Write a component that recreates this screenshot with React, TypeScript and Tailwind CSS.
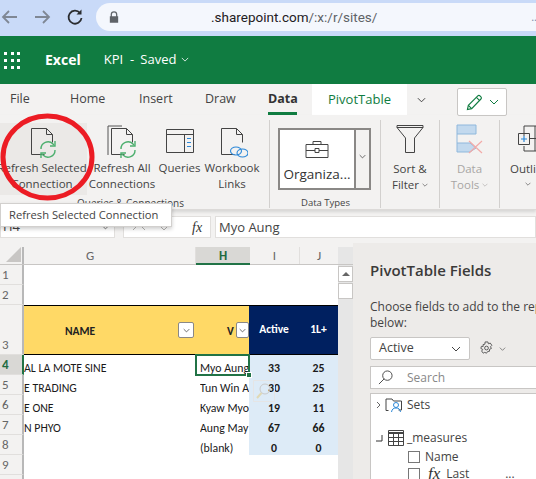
import React from "react";

const ui = "font-['Open_Sans','Noto_Sans',sans-serif]";

function Chevron({ className = "", color = "#444" }: { className?: string; color?: string }) {
  return (
    <svg viewBox="0 0 10 6" className={className} fill="none" stroke={color} strokeWidth="1">
      <path d="M1 1l4 4 4-4" />
    </svg>
  );
}

function DocIcon({ children, back = false }: { children?: React.ReactNode; back?: boolean }) {
  return (
    <svg viewBox="0 0 32 34" className="w-[32px] h-[34px]" fill="none">
      {back && <path d="M2 30V1h14" stroke="#555" strokeWidth="1" />}
      <path d="M5.5 29.5V3.5h15l6 6v8M5.500 29.5h13M20.5 3.500v6h6" stroke="#444" strokeWidth="1" />
      {children}
    </svg>
  );
}

function RefreshArrows() {
  return (
    <g fill="none" stroke="#4caf6e" strokeWidth="1.4">
      <path d="M15 24a7 7 0 0 1 12-5l1 1" />
      <path d="M29 16v5h-5" />
      <path d="M29 25a7 7 0 0 1-12 5l-1-1" />
      <path d="M15 33v-5h5" />
    </g>
  );
}

function RibbonButton({ label, icon, w, active = false }: { label: React.ReactNode; icon: React.ReactNode; w: string; active?: boolean }) {
  return (
    <div className={`${w} h-[72px] flex flex-col items-center shrink-0 overflow-visible ${active ? "bg-[#ebe9e7] pr-[3px]" : ""}`}>
      <div className="h-[37px] pt-[2px] flex items-start justify-center">{icon}</div>
      <div className="text-[11.5px] leading-[16px] text-center whitespace-nowrap text-[#444]">{label}</div>
    </div>
  );
}

function Sep() {
  return <div className="w-px h-[88px] bg-[#d2d0ce] shrink-0 -mt-[3px]" />;
}

const rows = [
  { n: "4", g: "AL LA MOTE SINE", h: "Myo Aung", i: "33", j: "25" },
  { n: "5", g: "E TRADING", h: "Tun Win A", i: "30", j: "25" },
  { n: "6", g: "E ONE", h: "Kyaw Myo", i: "19", j: "11" },
  { n: "7", g: "N PHYO", h: "Aung May", i: "67", j: "66" },
  { n: "8", g: "", h: "(blank)", i: "0", j: "0" },
];

function FilterBtn({ className = "" }: { className?: string }) {
  return (
    <div className={`h-[16px] bg-white border border-[#8a8886] rounded-[2px] flex items-center justify-center ${className}`}>
      <Chevron className="w-[7px] h-[5px]" color="#333" />
    </div>
  );
}

function RowHead({ n, h, active = false, bottom = false }: { n: string; h: string; active?: boolean; bottom?: boolean }) {
  return (
    <div className={`${h} w-[24px] shrink-0 border-r-2 border-b border-b-[#e1dfdd] pl-[2px] text-[13px] leading-[19px] flex ${bottom ? "items-end" : "items-center"} ${active ? "bg-[#d9d8d5] text-[#1e6b41] font-bold border-r-[#217346]" : "bg-[#f3f2f1] text-[#666] border-r-[#b8b8b8]"}`}>
      {n}
    </div>
  );
}

export default function App() {
  return (
    <div className={`${ui} relative w-[536px] h-[479px] overflow-hidden bg-[#f3f2f1] flex flex-col`}>
      {/* browser bar */}
      <div className="h-[36px] bg-[#c9daf8] pt-[3px] shrink-0">
        <div className="h-[28px] flex items-center relative">
          <svg viewBox="0 0 90 28" className="w-[90px] h-[28px] shrink-0" fill="none" strokeWidth="1.8">
            <path d="M17 14H3M9 8l-6 6 6 6" stroke="#7f8794" />
            <path d="M35 14h14M43 8l6 6-6 6" stroke="#7f8794" />
            <path d="M80 10a6.5 6.5 0 1 0 1.500 5" stroke="#2a2c30" />
            <path d="M81.500 6.500v5h-5z" fill="#2a2c30" stroke="none" />
          </svg>
          <div className="ml-[6px] flex-1 h-[28px] rounded-l-[14px] bg-[#f4f7fd] flex items-center">
            <svg viewBox="0 0 12 14" className="w-[10px] h-[12px] ml-[13px] shrink-0" fill="#5f6368">
              <path d="M2 6V4a4 4 0 0 1 8 0v2h1v8H1V6zm1.500 0h5V4a2.500 2.500 0 0 0-5 0z" />
            </svg>
            <span className="ml-[92px] text-[13.5px] text-[#1f2023] font-['Roboto',sans-serif] whitespace-nowrap">
              .sharepoint.com<span className="text-[#5f6368]">/:x:/r/sites/</span>
            </span>
            <span className="ml-auto text-[#7a8aa8] text-[11px] leading-[8px] mr-[-1px]">..</span>
          </div>
        </div>
      </div>

      {/* excel title */}
      <div className="h-[48px] bg-[#107c41] flex items-center text-white shrink-0 pb-[1px]">
        <div className="ml-[4px] w-[16px] h-[16px] grid grid-cols-3 gap-[4px]">
          {Array.from({ length: 9 }).map((_, i) => (
            <div key={i} className="w-[3px] h-[3px] bg-white" />
          ))}
        </div>
        <span className="ml-[25px] text-[14px] font-bold">Excel</span>
        <span className="ml-[23px] text-[13px]">KPI</span>
        <span className="ml-[7px] text-[13px]">-</span>
        <span className="ml-[6px] text-[13px]">Saved</span>
        <Chevron className="ml-[5px] w-[8px] h-[5px]" color="#fff" />
      </div>

      {/* tabs */}
      <div className="h-[31px] shrink-0 flex items-start text-[12.5px] text-[#444] relative">
        <span className="ml-[10px] mt-[6px] w-[21px]">File</span>
        <span className="ml-[39px] mt-[6px] w-[38px]">Home</span>
        <span className="ml-[31px] mt-[6px] w-[35px]">Insert</span>
        <span className="ml-[31px] mt-[6px] w-[32px]">Draw</span>
        <div className="ml-[31px] w-[29px] h-[31px] border-b-[3px] border-[#107c41] font-bold text-[#333] pt-[6px] whitespace-nowrap">Data</div>
        <div className="ml-[15px] w-[95px] h-[31px] bg-white text-[#107c41] text-center pt-[6px] text-[13px] font-medium">PivotTable</div>
        <Chevron className="ml-[10px] mt-[13px] w-[9px] h-[6px]" color="#333" />
        <div className="ml-[31px] mt-[4px] w-[50px] h-[28px] bg-white border border-[#c8c6c4] rounded-[2px] flex items-center justify-center gap-[6px] z-10">
          <svg viewBox="0 0 18 18" className="w-[17px] h-[17px]" fill="none" stroke="#107c41" strokeWidth="1.2">
            <path d="M1.500 16.500l1-4.500L12.500 2a1.600 1.600 0 0 1 2.300 0l1 1a1.600 1.600 0 0 1 0 2.300L6 15.500z" />
            <path d="M11 3.500l3.500 3.500M2.500 12l3.500 3.500" />
          </svg>
          <Chevron className="w-[10px] h-[6px]" color="#107c41" />
        </div>
      </div>

      {/* ribbon */}
      <div className="h-[95px] shrink-0 flex items-start pt-[8px] border-b border-[#dcdad8] shadow-[0_2px_3px_rgba(0,0,0,0.12)] z-10 overflow-hidden relative">
        <div className="w-[269px] shrink-0 flex flex-col items-stretch">
          <div className="flex">
            <RibbonButton
              w="w-[87px]"
              active
              label={<>Refresh Selected<br />Connection</>}
              icon={<DocIcon><RefreshArrows /></DocIcon>}
            />
            <RibbonButton
              w="w-[70px]"
              label={<>Refresh All<br />Connections</>}
              icon={<DocIcon back><RefreshArrows /></DocIcon>}
            />
            <RibbonButton
              w="w-[45px]"
              label="Queries"
              icon={
                <svg viewBox="0 0 32 34" className="w-[32px] h-[34px]" fill="none" stroke="#444">
                  <path d="M2.500 4.500h27v23h-27zM2.500 9.500h27M20.500 9.500v18" />
                  <path d="M23 13.500h4M23 17.500h4M23 21.500h4" stroke="#2b88d8" strokeWidth="1.2" />
                </svg>
              }
            />
            <RibbonButton
              w="w-[60px]"
              label={<>Workbook<br />Links</>}
              icon={
                <DocIcon>
                  <g stroke="#2b88d8" strokeWidth="1.1" fill="none">
                    <ellipse cx="20" cy="26" rx="5.500" ry="4" />
                    <ellipse cx="26.500" cy="28" rx="5.500" ry="4" />
                  </g>
                </DocIcon>
              }
            />
          </div>
          <span className="text-[10px] leading-[14px] mt-[1px] pl-[77px] text-[#444] whitespace-nowrap">Queries &amp; Connections</span>
        </div>
        <Sep />
        <div className="w-[110px] shrink-0 flex flex-col items-start pl-[8px]">
          <div className="mt-[5px] w-[93px] h-[62px] border-2 border-[#8a8886] flex">
            <div className="w-[76px] border-r-2 border-[#8a8886] bg-white flex flex-col items-center">
              <svg viewBox="0 0 24 18" className="w-[24px] h-[18px] mt-[10px]" fill="none" stroke="#444">
                <path d="M1 4.500h22v13H1zM8 4.500v-3h8v3M1 10.500h9M14 10.500h9M10 8.500h4v4h-4z" />
              </svg>
              <span className="text-[13.5px] leading-[18px] mt-[7px] text-[#333] whitespace-nowrap">Organiza...</span>
            </div>
            <div className="flex-1 flex items-center justify-center bg-[#f3f2f1]">
              <Chevron className="w-[7px] h-[5px] mb-[6px]" color="#333" />
            </div>
          </div>
          <span className="text-[9.5px] leading-[14px] mt-[6px] ml-[23px] text-[#444] whitespace-nowrap">Data Types</span>
        </div>
        <Sep />
        <div className="w-[58px] shrink-0 flex flex-col items-center">
          <svg viewBox="0 0 28 30" className="w-[28px] h-[30px] mt-[1px]" fill="none" stroke="#444">
            <path d="M1 3.500V1.500h26v2L18.500 14v14.500h-9V14z" />
            <path d="M1 3.500h26" />
          </svg>
          <div className="text-[11.5px] leading-[16px] text-[#444] mt-[7px] text-center whitespace-nowrap">
            Sort &amp;
            <div className="flex items-center gap-[3px]">Filter<Chevron className="w-[6px] h-[4px]" color="#444" /></div>
          </div>
        </div>
        <Sep />
        <div className="w-[59px] shrink-0 flex flex-col items-center">
          <svg viewBox="0 0 28 30" className="w-[28px] h-[30px] mt-[1px]" fill="none">
            <path d="M1 1h19v9H1z" fill="#c2d9ee" stroke="#8fb8dc" />
            <path d="M1 10v9" stroke="#8fb8dc" />
            <path d="M1 19h13l6 5-6 4H1z" fill="#c2d9ee" stroke="#8fb8dc" />
            <path d="M13 17l13 12M26 17L13 29" stroke="#f2aaa8" strokeWidth="1.2" />
          </svg>
          <div className="text-[11.5px] leading-[16px] text-[#a8a6a4] mt-[7px] text-center whitespace-nowrap">
            Data
            <div className="flex items-center gap-[3px]">Tools<Chevron className="w-[6px] h-[4px]" color="#a8a6a4" /></div>
          </div>
        </div>
        <Sep />
        <div className="w-[60px] shrink-0 flex flex-col overflow-hidden">
          <svg viewBox="0 0 40 30" className="w-[40px] h-[30px] mt-[1px] self-start ml-[17px] shrink-0" fill="none" stroke="#444">
            <path d="M12 2H7v10M7 22v5h5M12 2h28M12 27h28M12 14.500h28M18 2v25" />
            <path d="M1.500 9.500h11v11h-11z" />
            <path d="M4 15h6M7 12v6" stroke="#2b88d8" strokeWidth="1.2" />
          </svg>
          <div className="text-[11.5px] leading-[16px] text-[#444] mt-[7px] whitespace-nowrap pl-[10px]">
            Outline
            <Chevron className="ml-[15px] mt-[5px] w-[6px] h-[4px]" color="#444" />
          </div>
        </div>
      </div>

      {/* formula bar */}
      <div className="h-[33px] shrink-0 pt-[6px] flex items-start bg-[#f3f2f1]">
        <div className="w-[115px] h-[22px] bg-white border border-[#e1dfdd] text-[13px] text-[#444] flex items-center px-[2px] justify-between">
          <span>H4</span>
          <Chevron className="w-[7px] h-[5px] mr-[3px]" color="#444" />
        </div>
        <div className="ml-[8px] w-[88px] h-[22px] bg-white border border-[#e1dfdd] flex items-center">
          <svg viewBox="0 0 60 10" className="w-[60px] h-[10px]" fill="none" stroke="#b5b3b1" strokeWidth="1">
            <path d="M9 8l6-6 6 6M34 2l6 6 6-6" />
          </svg>
          <span className="ml-[8px] text-[14px] italic font-['Liberation_Serif',serif] text-[#333]">fx</span>
        </div>
        <div className="ml-[4px] flex-1 h-[22px] bg-white border border-[#e1dfdd] text-[13px] leading-[20px] pl-[3px] text-[#444]">Myo Aung</div>
      </div>

      {/* sheet + panel */}
      <div className="flex-1 flex min-h-0">
        <div className="w-[353px] shrink-0 flex flex-col font-['Carlito','Open_Sans',sans-serif] pt-[4px]">
          {/* column heads */}
          <div className="h-[18px] shrink-0 flex text-[13px] leading-[17px] bg-[#f3f2f1] border-b border-[#c8c6c4]">
            <div className="w-[24px] border-r-2 border-[#b8b8b8] flex items-start justify-end pr-[1px]">
              <svg viewBox="0 0 15 15" className="w-[15px] h-[15px]"><path d="M15 0v15H0z" fill="#c8c6c4" /></svg>
            </div>
            <div className="w-[172px] pl-[62px] text-[#666] border-r border-[#e1dfdd]">G</div>
            <div className="w-[54px] text-center text-[#1e6b41] font-bold bg-[#d9d8d5] border-b-2 border-[#217346] h-[18px]">H</div>
            <div className="w-[50px] text-center text-[#666] border-r border-[#e1dfdd]">I</div>
            <div className="w-[38px] text-center text-[#666]">J</div>
            <div className="flex-1 bg-[#e6e6e6]" />
          </div>
          <div className="flex-1 flex min-h-0">
            <div className="w-[338px] shrink-0 bg-white flex flex-col text-[11.8px] text-[#1a1a1a]">
              <div className="flex h-[20px] shrink-0"><RowHead n="1" h="h-[20px]" /></div>
              <div className="flex h-[20px] shrink-0"><RowHead n="2" h="h-[20px]" /></div>
              <div className="flex h-[50px] shrink-0">
                <RowHead n="3" h="h-[50px]" bottom />
                <div className="flex-1 flex border-y border-black">
                  <div className="w-[225px] bg-[#ffd966] relative overflow-hidden">
                    <span className="absolute left-[41px] top-[17px] font-bold text-[11.5px] text-[#222]">NAME</span>
                    <FilterBtn className="w-[16px] absolute left-[154px] top-[16px]" />
                    <span className="absolute left-[203px] top-[17px] font-bold text-[11.5px] text-[#222]">V</span>
                    <FilterBtn className="w-[13px] absolute left-[212px] top-[16px]" />
                  </div>
                  <div className="flex-1 bg-[#002060] text-white font-bold text-[11.5px] flex">
                    <div className="w-[50px] text-center pt-[15px]">Active</div>
                    <div className="flex-1 text-center pt-[15px]">1L+</div>
                  </div>
                </div>
              </div>
              {rows.map((r, idx) => (
                <div key={r.n} className="flex h-[20px] shrink-0 leading-[26px]">
                  <RowHead n={r.n} h="h-[20px]" active={idx === 0} />
                  <div className="w-[172px] overflow-hidden whitespace-nowrap">{r.g}</div>
                  <div className="w-[53px] relative whitespace-nowrap pl-[4px]">
                    <div className="overflow-hidden h-[20px]">{r.h}</div>
                    {idx === 0 && (
                      <div className="absolute -left-px -top-px w-[55px] h-[22px] border-2 border-[#217346]">
                        <div className="absolute -right-[4px] -bottom-[4px] w-[6px] h-[6px] bg-[#217346] border border-white" />
                      </div>
                    )}
                  </div>
                  <div className="w-[50px] bg-[#ddebf7] text-center font-bold">{r.i}</div>
                  <div className="flex-1 bg-[#ddebf7] text-center font-bold">{r.j}</div>
                </div>
              ))}
              {[9, 10, 11].map((n) => (
                <div key={n} className="flex h-[20px] shrink-0"><RowHead n={String(n)} h="h-[20px]" /></div>
              ))}
            </div>
            <div className="flex-1 bg-[#e6e6e6] flex flex-col items-start pt-[1px]">
              <div className="w-[15px] h-[16px] bg-white border border-[#c8c6c4] flex items-center justify-center">
                <div className="w-0 h-0 border-x-[4px] border-x-transparent border-b-[4px] border-b-[#666]" />
              </div>
              <div className="w-[15px] h-[16px] mt-px bg-white border border-[#c8c6c4]" />
            </div>
          </div>
        </div>

        {/* panel */}
        <div className="flex-1 bg-[#edebe9] overflow-hidden pl-[17px] text-[#444] relative">
          <div className="text-[15px] leading-[20px] font-semibold text-[#3b3a39] mt-[17px] whitespace-nowrap">PivotTable Fields</div>
          <div className="text-[12px] leading-[16px] mt-[19px] whitespace-nowrap">Choose fields to add to the report<br />below:</div>
          <div className="flex items-center mt-[6px]">
            <div className="w-[100px] h-[23px] bg-white border border-[#c8c6c4] rounded-[2px] flex items-center justify-between text-[12.5px] pl-[8px] pr-[8px]">
              <span>Active</span>
              <Chevron className="w-[10px] h-[6px]" color="#444" />
            </div>
            <svg viewBox="0 0 16 16" className="w-[15px] h-[15px] ml-[9px]" fill="none" stroke="#555">
              <path d="M6.500 1h3l.5 2 2-.8 1.700 2.400-1.400 1.500.9 1.900-2 .9v2l-2 .3L8 13l-1.900-.9-1.600.9-1.700-2.300L4 9 2 8l.5-2.300 2 .1-.2-2 2-.4z" />
              <circle cx="8" cy="7.500" r="2" />
            </svg>
            <Chevron className="ml-[5px] w-[7px] h-[4px]" color="#555" />
          </div>
          <div className="mt-[6px] w-[190px] h-[23px] bg-white border border-[#c8c6c4] flex items-center text-[12px] text-[#888]">
            <svg viewBox="0 0 16 16" className="w-[15px] h-[15px] ml-[7px]" fill="none" stroke="#444">
              <circle cx="10" cy="6" r="5" />
              <path d="M6.500 9.500L1 15" />
            </svg>
            <span className="ml-[14px]">Search</span>
          </div>
          <div className="mt-[4px] w-[190px] h-[100px] bg-white border border-[#c8c6c4] relative text-[12px] text-[#444]">
            <div className="flex items-center h-[20px] mt-[1px] pl-[5px]">
              <Chevron className="w-[5px] h-[8px] -rotate-90 scale-150" color="#333" />
              <svg viewBox="0 0 18 16" className="w-[18px] h-[16px] ml-[4px]" fill="none" stroke="#444">
                <path d="M3.500 13.500h-2.500V2h6l1.500 2h8v9h-3" />
                <circle cx="11" cy="8" r="2.500" stroke="#2b88d8" />
                <path d="M6.500 15c.5-3 2-4 4.500-4s4 1 4.500 4" stroke="#2b88d8" />
              </svg>
              <span className="ml-[4px]">Sets</span>
            </div>
            <div className="flex items-center h-[18px] mt-[14px] pl-[5px]">
              <svg viewBox="0 0 7 7" className="w-[7px] h-[7px]" fill="none" stroke="#333"><path d="M6 0v6H0" /></svg>
              <svg viewBox="0 0 16 16" className="w-[16px] h-[16px] ml-[5px]" fill="none" stroke="#444">
                <path d="M.5.5h15v15H.5z" />
                <path d="M.5 3h15" strokeWidth="2" />
                <path d="M.5 7.500h15M.5 11.500h15M5.500 3v12M10.500 3v12" />
              </svg>
              <span className="ml-[3px]">_measures</span>
            </div>
            <div className="flex items-center h-[18px] mt-[1px] pl-[37px]">
              <div className="w-[12px] h-[12px] border border-[#777] bg-white" />
              <span className="ml-[5px]">Name</span>
            </div>
            <div className="flex items-center h-[18px] pl-[37px] -mt-px">
              <div className="w-[12px] h-[12px] border border-[#777] bg-white" />
              <span className="ml-[8px] font-['Liberation_Serif',serif] italic text-[17px] text-[#333]">fx</span>
              <span className="ml-[6px]">Last</span>
              <span className="ml-[36px]">...</span>
            </div>
            <div className="absolute right-0 top-[17px] w-[3px] h-[17px] bg-[#c8c6c4]" />
          </div>
        </div>
      </div>

      {/* tooltip */}
      <div className="absolute left-0 top-[203px] w-[172px] h-[24px] z-20 bg-white border border-[#d2d0ce] shadow-[0_2px_4px_rgba(0,0,0,0.2)] text-[11.2px] leading-[22px] pl-[8px] text-[#444] whitespace-nowrap">
        Refresh Selected Connection
      </div>

      {/* ghost cursor icon */}
      <svg viewBox="0 0 22 22" className="absolute left-[253px] top-[380px] w-[22px] h-[22px] z-20" fill="none">
        <path d="M.5.5h21v21H.5z" stroke="#e5e5e5" />
        <circle cx="12" cy="9" r="5" stroke="#c9c9c9" />
        <path d="M8.500 13L4 18" stroke="#e0d9b5" strokeWidth="2" />
      </svg>

      {/* red circle */}
      <svg viewBox="0 0 96 90" className="absolute left-0 top-[113px] w-[96px] h-[90px] z-30" fill="none">
        <ellipse cx="47.500" cy="44" rx="44.500" ry="41" stroke="#ec1c24" strokeWidth="5" />
      </svg>
    </div>
  );
}
